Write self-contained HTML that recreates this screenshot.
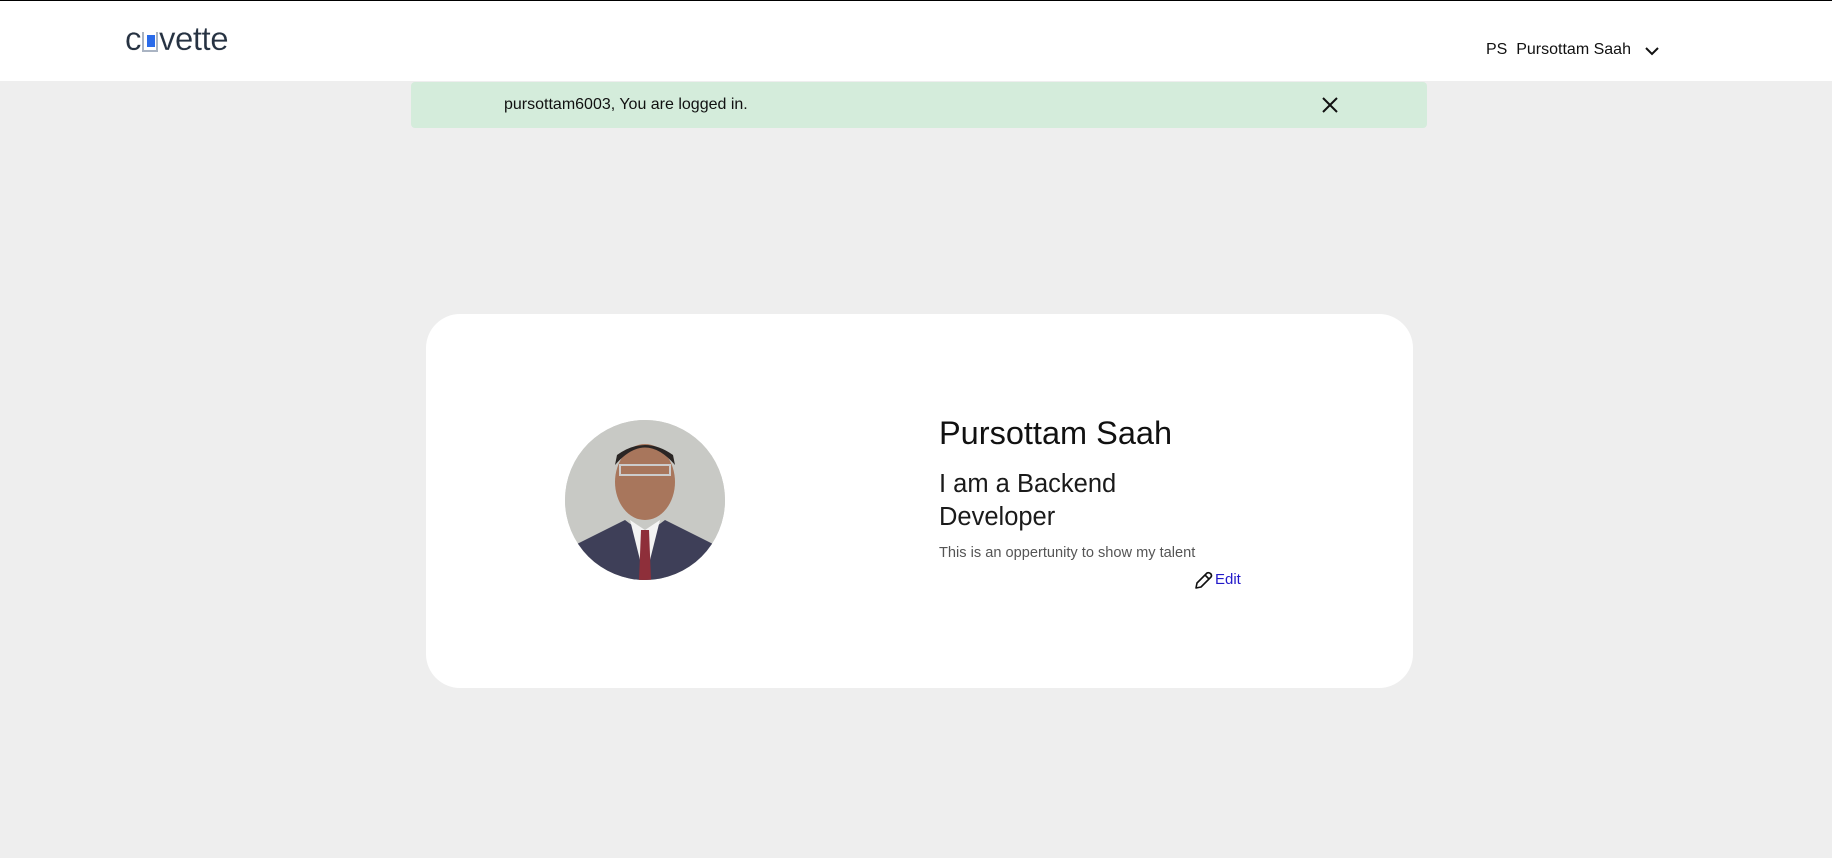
<!DOCTYPE html>
<html><head><meta charset="utf-8"><style>
*{margin:0;padding:0;box-sizing:border-box}
body{width:1832px;height:858px;background:#eeeeee;font-family:"Liberation Sans",sans-serif;position:relative;overflow:hidden;color:#111}
.hdr{position:absolute;left:0;top:0;width:1832px;height:81px;background:#fff;border-top:1px solid #000}
.logo{position:absolute;left:125px;top:19px;font-size:33px;color:#263242;letter-spacing:-0.5px;font-weight:400;-webkit-text-stroke:0.2px #fff}
.user{position:absolute;left:1486px;top:40px;font-size:16px;color:#111}
.banner{position:absolute;left:411px;top:82px;width:1016px;height:46px;background:#d4ecdb;border-radius:4px}
.banner span{position:absolute;left:93px;top:14px;font-size:16px}
.card{position:absolute;left:426px;top:314px;width:987px;height:374px;background:#fff;border-radius:34px}
.av{position:absolute;left:565px;top:420px;width:160px;height:160px;border-radius:50%;overflow:hidden;background:#c9cac6}
.name{position:absolute;left:939px;top:415px;font-size:32.5px}
.sub{position:absolute;left:939px;top:468px;font-size:25.5px;line-height:33px;color:#1a1a1a}
.small{position:absolute;left:939px;top:545px;font-size:14.6px;color:#555}
.edit{position:absolute;left:1215px;top:571px;font-size:15px;color:#2219c9}
</style></head><body>
<div class="hdr">
<div class="logo">c<span style="display:inline-block;width:16px;height:20px;border:2px solid #aab4c3;border-top:none;position:relative;top:2px;margin:0 1px"><span style="position:absolute;left:3px;top:3px;width:8px;height:12px;background:#2a6bea"></span></span>vette</div>
<div class="user">PS&nbsp;&nbsp;Pursottam Saah</div>
<svg style="position:absolute;left:1644px;top:44px" width="16" height="12" viewBox="0 0 16 12"><path d="M2 3 L8 9 L14 3" fill="none" stroke="#111" stroke-width="2"/></svg>
</div>
<div class="banner"><span>pursottam6003, You are logged in.</span>
<svg style="position:absolute;left:911px;top:15px" width="16" height="16" viewBox="0 0 16 16"><path d="M1 1 L15 15 M15 1 L1 15" stroke="#111" stroke-width="2"/></svg></div>
<div class="card"></div>
<div class="av"><svg width="160" height="160" viewBox="0 0 160 160">
<rect width="160" height="160" fill="#c8c9c5"/>
<ellipse cx="80" cy="62" rx="30" ry="38" fill="#a8765c"/>
<path d="M50 45 Q80 10 110 45 L108 35 Q80 15 52 35Z" fill="#2a2524"/>
<rect x="55" y="45" width="50" height="10" fill="none" stroke="#ccc" stroke-width="2"/>
<path d="M0 160 L10 125 L60 100 L80 115 L100 100 L150 125 L160 160Z" fill="#3e3f58"/>
<path d="M65 100 L80 160 L95 100 L80 110Z" fill="#f3f3f3"/>
<path d="M76 110 L84 110 L86 160 L74 160Z" fill="#8e2f3a"/>
</svg></div>
<div class="name">Pursottam Saah</div>
<div class="sub">I am a Backend<br>Developer</div>
<div class="small">This is an oppertunity to show my talent</div>
<svg style="position:absolute;left:1193px;top:571px" width="20" height="20" viewBox="0 0 20 20"><path d="M3 17 L4 12 L14 2 Q16 1 18 3 Q19 5 18 6 L8 16 Z M12 4 L16 8" fill="none" stroke="#111" stroke-width="1.6" stroke-linejoin="round"/></svg>
<div class="edit">Edit</div>
</body></html>
